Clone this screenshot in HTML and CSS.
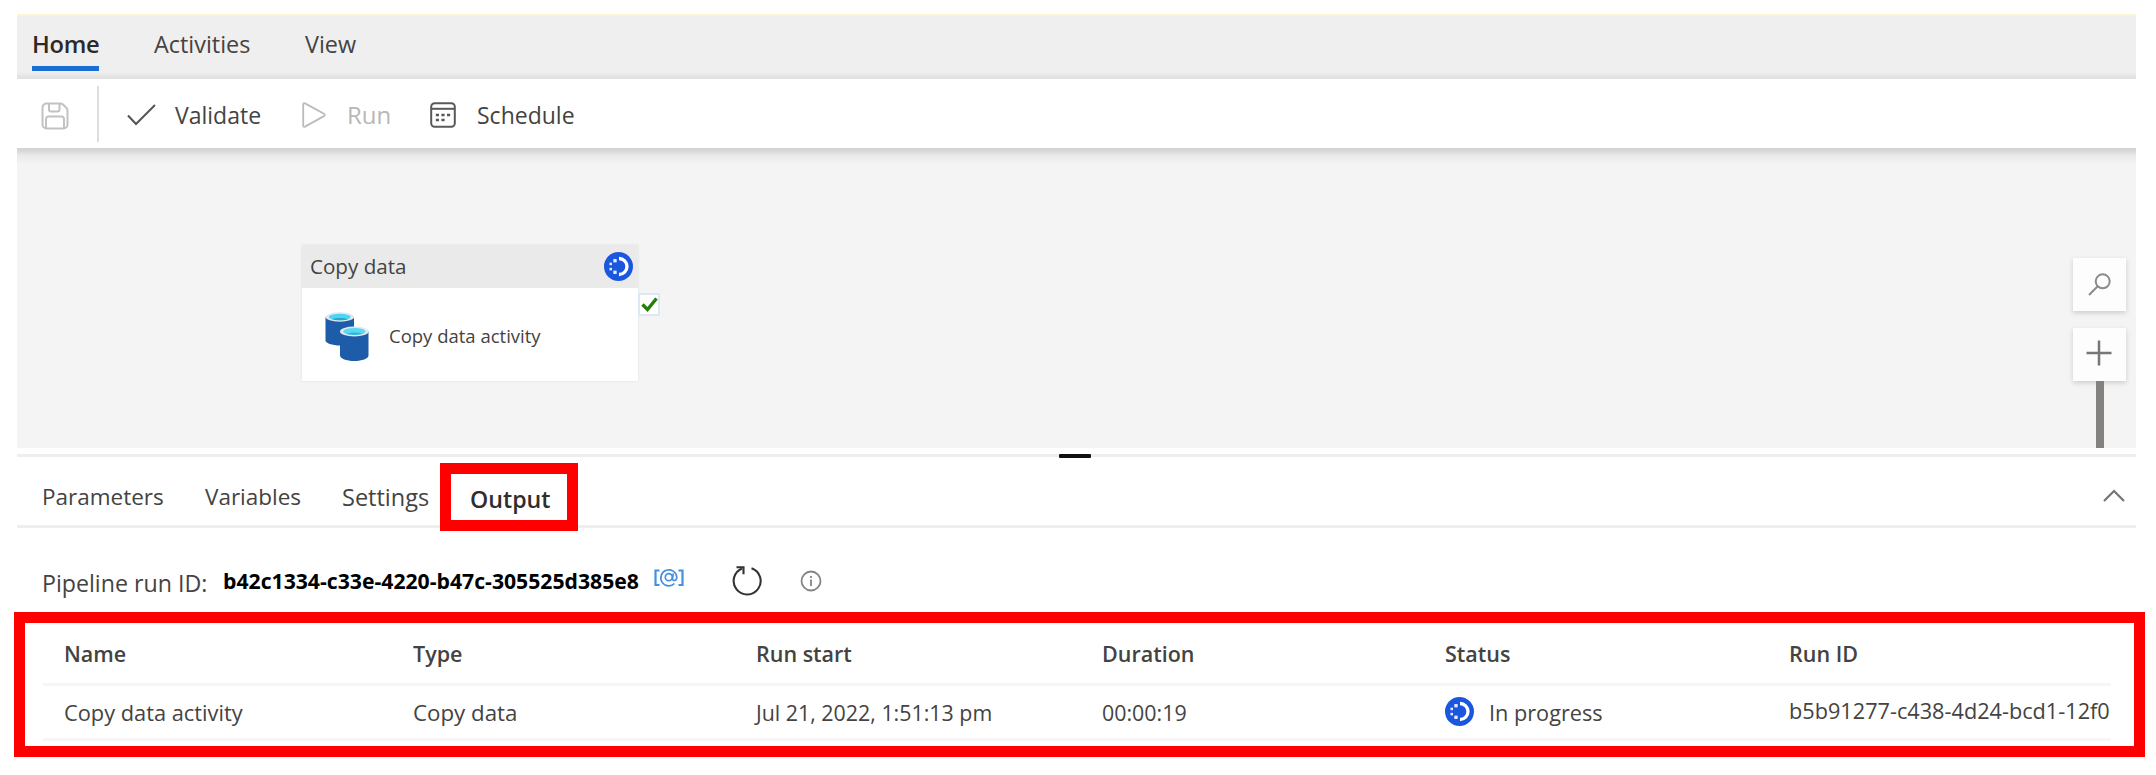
FILE: index.html
```html
<!DOCTYPE html>
<html lang="en">
<head>
<meta charset="utf-8">
<title>Pipeline</title>
<link rel="stylesheet" href="styles.css">
</head>
<body>
<svg width="0" height="0" class="defs">
  <symbol id="progress" viewBox="0 0 28 28">
    <circle cx="14" cy="14" r="14" fill="#1b57de"/>
    <path d="M14.500 6.300a7.700 7.700 0 0 1 0 15.400" fill="none" stroke="#fff" stroke-width="3.200"/>
    <g fill="#fff" fill-opacity=".9"><rect x="9" y="6.800" width="3.200" height="3.200"/><rect x="5.300" y="10.300" width="2.400" height="2.400"/><rect x="5.300" y="15.300" width="2.400" height="2.400"/><rect x="9" y="18" width="3.200" height="3.200"/></g>
  </symbol>
</svg>
<div class="app">
  <nav class="ribbon">
    <span class="ribbon-tab active">Home</span>
    <span class="ribbon-tab">Activities</span>
    <span class="ribbon-tab">View</span>
  </nav>
  <div class="toolbar">
    <svg class="save" width="28" height="28" viewBox="0 0 28 28" fill="none" stroke="#c4c2c0" stroke-width="2">
      <path d="M5.500 1.500H19.500q1.500 0 2.500 1L25.500 6q1 1 1 2.500V22.500a4 4 0 0 1-4 4H5.500a4 4 0 0 1-4-4V5.500a4 4 0 0 1 4-4zM8 2v5.500a2 2 0 0 0 2 2h6.500a2 2 0 0 0 2-2V2M5 26V17a2.500 2.500 0 0 1 2.500-2.500h13a2.500 2.500 0 0 1 2.500 2.500V26"/>
    </svg>
    <i class="divider"></i>
    <span class="tool validate"><svg width="29" height="24" viewBox="0 0 29 24" fill="none" stroke="#555453" stroke-width="2"><path d="M1 12.500 9 21 28 2"/></svg>Validate</span>
    <span class="tool run"><svg width="24" height="26" viewBox="0 0 24 26" fill="none" stroke="#bdbbb9" stroke-width="1.800" stroke-linejoin="round"><path d="M1.200 2.500C1.200 1.300 2 .9 3 1.400L22 11.800c1 .6 1 1.700 0 2.300L3 24.600c-1 .5-1.800.1-1.800-1z"/></svg>Run</span>
    <span class="tool schedule"><svg width="26" height="26" viewBox="0 0 26 26" fill="none" stroke="#5a5958" stroke-width="2"><rect x="1.200" y="1.200" width="23.600" height="23.600" rx="3.500"/><path d="M1 6.800h24"/><path d="M5.800 13h14.500M5.800 18h9.200" stroke-width="2.600" stroke-dasharray="3.200 2.400"/></svg>Schedule</span>
  </div>
  <main class="canvas">
    <section class="node">
      <header>Copy data<svg width="29" height="29"><use href="#progress"/></svg></header>
      <div class="node-body">
        <svg width="44" height="50" viewBox="0 0 44 50">
          <path d="M.5 5v23.500C.5 31 7 33.500 15 33.500s14-2.500 14-5V5z" fill="#1c5ca8"/>
          <ellipse cx="14.800" cy="5" rx="14.300" ry="4.700" fill="#e4e8ec"/><ellipse cx="14.800" cy="5" rx="11" ry="3.300" fill="#4bd6f5"/><path d="M7 7.200c4-1.600 12-1.600 16 0-4 1.500-12 1.500-16 0z" fill="#2aa5c9"/>
          <path d="M15 19.500v24c0 3 6.500 5.500 14.300 5.500s14.200-2.500 14.200-5.500v-24z" fill="#1c5ca8"/>
          <ellipse cx="29.300" cy="19.500" rx="14.300" ry="5" fill="#e4e8ec"/><ellipse cx="29.300" cy="19.500" rx="11.300" ry="3.500" fill="#5bd8f3"/><path d="M21.500 21.800c4-1.600 12-1.600 16 0-4 1.500-12 1.500-16 0z" fill="#35b5d6"/>
        </svg>
        <span>Copy data activity</span>
      </div>
    </section>
    <div class="success"><svg width="17" height="15" viewBox="0 0 17 15"><path d="M1.500 7.500 6.500 12.500 15.500 1.500" fill="none" stroke="#267f0c" stroke-width="3.400"/></svg></div>
    <div class="zoom-tools">
      <div class="zoom-button"><svg width="23" height="23" viewBox="0 0 23 23" fill="none" stroke="#8c8b8a" stroke-width="2"><circle cx="14.700" cy="8.300" r="7"/><path d="M9.700 13.300 1 22"/></svg></div>
      <div class="zoom-button"><svg class="plus" width="26" height="26" viewBox="0 0 26 26" stroke="#777675" stroke-width="2.500"><path d="M13 .5v25M.5 13h25"/></svg></div>
      <i class="zoom-track"></i>
    </div>
  </main>
  <div class="splitter"><i></i></div>
  <nav class="panel-tabs">
    <span>Parameters</span><span>Variables</span><span>Settings</span><span class="output">Output</span>
    <svg class="chevron" width="22" height="13" viewBox="0 0 22 13" fill="none" stroke="#767574" stroke-width="2.200"><path d="M1 12 11 2l10 10"/></svg>
  </nav>
  <div class="run-info">
    <span class="run-label">Pipeline run ID:</span>
    <b class="run-id">b42c1334-c33e-4220-b47c-305525d385e8</b>
    <svg class="expression" width="30" height="20" viewBox="0 0 30 20" fill="none" stroke="#4690e0" stroke-width="2.200"><path d="M5.500 2.500H1.500v14.500h4M24.500 2.500h4v14.500h-4"/><path d="M20.500 15.500A8 8 0 1 1 22.800 9c0 4.600-4.600 4.200-4.300 1.500L19.300 5.500" stroke-width="1.700"/><circle cx="14.800" cy="9.200" r="3.500" stroke-width="1.700"/></svg>
    <svg class="refresh" width="30" height="30" viewBox="0 0 30 30" fill="none" stroke="#343332" stroke-width="2.100"><path d="M19.500 2.200a13.500 13.500 0 1 1-9.500.3"/><path d="M4.500 1.300h7v7"/></svg>
    <svg class="info" width="22" height="22" viewBox="0 0 22 22" fill="none" stroke="#858483" stroke-width="1.800"><circle cx="11" cy="11" r="9.500"/><path d="M11 9.500v6.500M11 6v1.900"/></svg>
  </div>
</div>
<section class="results">
  <div class="row head"><span>Name</span><span>Type</span><span>Run start</span><span>Duration</span><span>Status</span><span>Run ID</span></div>
  <div class="row"><span class="name">Copy data activity</span><span class="type">Copy data</span><span>Jul 21, 2022, 1:51:13 pm</span><span>00:00:19</span><span class="status"><svg width="29" height="29"><use href="#progress"/></svg>In progress</span><span class="activity-id">b5b91277-c438-4d24-bcd1-12f0</span></div>
</section>
</body>
</html>
```
FILE: styles.css
```css
* { box-sizing: border-box; }
body {
  margin: 0;
  height: 775px;
  overflow: hidden;
  background: #fff;
  color: #444342;
  font-family: "Open Sans", "Noto Sans", sans-serif;
  white-space: nowrap;
}
svg { display: block; flex: none; }
.defs { position: absolute; }
.app { margin: 0 20px 0 17px; padding-top: 14px; }

.ribbon {
  display: grid;
  grid-template-columns: 122px 151px 100px;
  height: 65px;
  padding-left: 15px;
  border-top: 2px solid #fdf5d0;
  background: linear-gradient(#efefef 56px, #e2e2e2 61px, #e2e2e2);
  font-size: 23.4px;
}
.ribbon-tab { justify-self: start; height: 55px; line-height: 57px; }
.ribbon-tab.active {
  width: 67px;
  border-bottom: 5px solid #1b6ed6;
  color: #2b2a29;
  font-size: 23.7px;
  font-weight: 600;
  letter-spacing: -.3px;
}

.toolbar {
  display: flex;
  align-items: center;
  height: 69px;
  padding-left: 24px;
  font-size: 23px;
}
.save { margin-top: 5px; }
.divider { width: 2px; height: 56px; margin: 0 28px 0 28px; background: #dedede; }
.tool { display: flex; align-items: center; line-height: 40px; padding-top: 2px; }
.validate { width: 175px; gap: 19px; }
.run { width: 128px; gap: 21px; color: #b9b7b5; font-size: 24px; }
.schedule { gap: 21px; }

.canvas {
  position: relative;
  height: 300px;
  background: linear-gradient(#d3d3d3, #d8d8d8 3px, #e9e9e9 7px, #f4f4f4 16px);
}
.node {
  position: absolute;
  left: 285px;
  top: 97px;
  width: 336px;
  height: 136px;
  background: #fff;
  box-shadow: 0 0 2px #ddd;
}
.node header {
  display: flex;
  align-items: center;
  justify-content: space-between;
  height: 43px;
  padding: 0 5px 1px 8px;
  background: #eaeaea;
  font-size: 20.6px;
}
.node-body { display: flex; align-items: center; gap: 20px; height: 93px; padding: 4px 0 0 23px; font-size: 18.5px; }
.node-body span { padding-bottom: 3px; }
.success {
  position: absolute;
  left: 621px;
  top: 145px;
  display: grid;
  place-items: center;
  width: 22px;
  height: 23px;
  border: 2px solid #dce8f6;
  background: #fff;
}
.zoom-tools { position: absolute; right: 10px; top: 110px; width: 53px; display: flex; flex-direction: column; }
.zoom-button {
  display: grid;
  place-items: center;
  height: 53px;
  margin-bottom: 17px;
  background: #fdfdfd;
  box-shadow: 0 2px 5px #ccc;
}
.zoom-button + .zoom-button { margin-bottom: 0; }
.plus { margin: 0 2px 4px 0; }
.zoom-track { width: 8px; height: 67px; margin-left: 23px; background: #838281; z-index: 1; }

.splitter { display: flex; justify-content: center; align-items: center; height: 15px; margin-bottom: -6px; background: linear-gradient(transparent 6px, #eee 6px, #eee 9px, transparent 9px); }
.splitter i { width: 32px; height: 4px; margin-right: 4px; border-radius: 1px; background: #111; }
.panel-tabs {
  display: flex;
  align-items: center;
  height: 71px;
  padding: 11px 11px 0 25px;
  border-bottom: 3px solid #eee;
  font-size: 22.5px;
  line-height: 60px;
}
.panel-tabs span { padding-top: 1px; }
.panel-tabs span:nth-child(1) { width: 163px; }
.panel-tabs span:nth-child(2) { width: 137px; }
.panel-tabs span:nth-child(3) { width: 98px; font-size: 23.5px; }
.panel-tabs .output {
  width: 138px;
  height: 68px;
  margin: 0 0 -1px;
  padding: 0 0 0 19px;
  border: 11px solid #f00;
  background: #fff;
  color: #2f2e2d;
  font-size: 23.2px;
  font-weight: 600;
  line-height: 50px;
}
.chevron { margin: 0 0 3px auto; }

.run-info { display: flex; height: 84px; padding: 36px 0 0 25px; align-items: flex-start; line-height: 36px; }
.run-label { width: 181px; font-size: 23.2px; padding-top: 1px; }
.run-id { width: 431px; color: #000; font-size: 21.2px; line-height: 34px; }
.expression { margin: 4px 0 0; }
.refresh { margin: 2px 0 0 48px; }
.info { margin: 6px 0 0 38px; }

.results {
  width: 2131px;
  height: 145px;
  margin-left: 14px;
  border: 11px solid #f00;
  padding: 0 23px 0 18px;
}
.row {
  display: grid;
  grid-template-columns: 349px 343px 346px 343px 344px 1fr;
  align-items: center;
  height: 55px;
  padding: 2px 0 0 21px;
  border-bottom: 3px solid #f6f6f6;
  font-size: 21.4px;
  line-height: 40px;
}
.head { height: 63px; font-size: 21.5px; font-weight: 600; }
.name { font-size: 21.8px; }
.type { font-size: 22.3px; }
.status { display: flex; align-items: center; gap: 15px; font-size: 21.7px; }
.status svg { margin-top: -4px; }
.activity-id { overflow: hidden; font-size: 21.7px; margin-top: -4px; }
```
